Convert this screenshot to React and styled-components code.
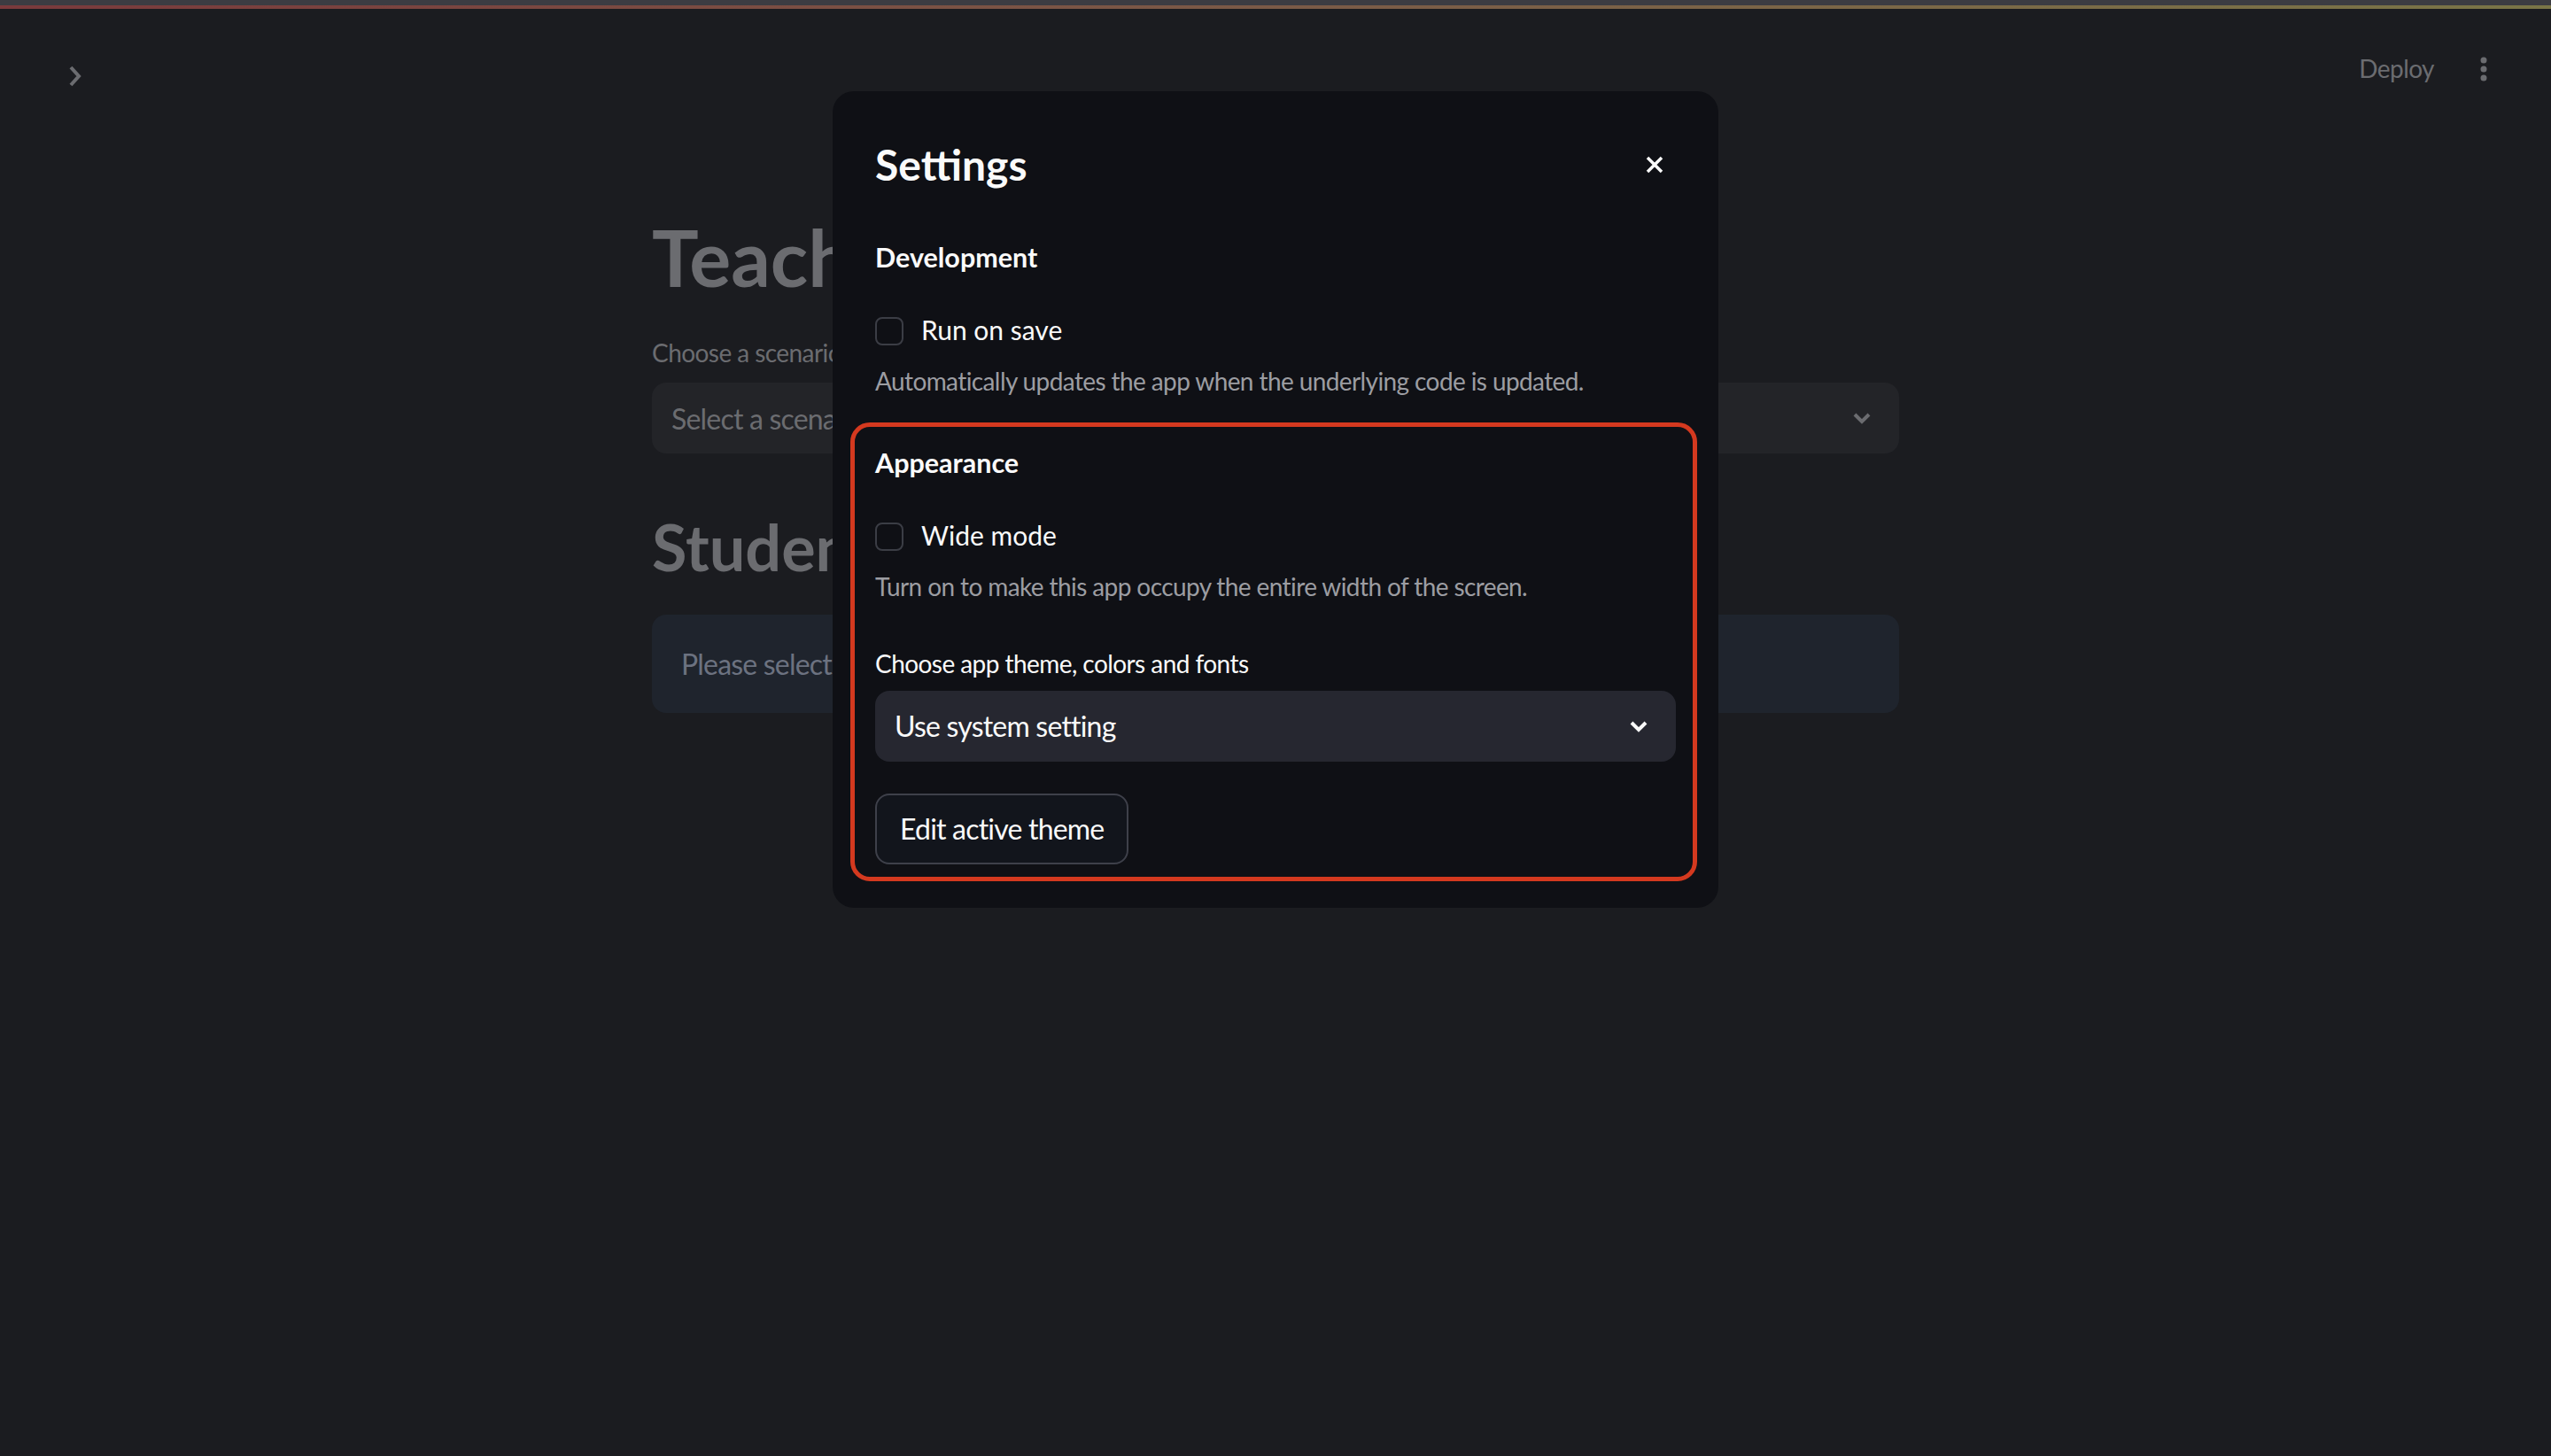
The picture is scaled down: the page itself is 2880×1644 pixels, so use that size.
import styled, { createGlobalStyle } from 'styled-components'

const GlobalStyle = createGlobalStyle`
  html, body {
    margin: 0;
    padding: 0;
  }
  body {
    background: #1b1c20;
    font-family: Lato, "Liberation Sans", sans-serif;
    -webkit-font-smoothing: antialiased;
  }
  * {
    box-sizing: border-box;
  }
`

const Page = styled.div`
  min-height: 100vh;
  background: #1b1c20;
`

const TopBar = styled.div`
  height: 10px;
  border-top: 6px solid #3c3c42;
  background: linear-gradient(90deg, #7a3a3c 0%, #7b5a47 50%, #7a7547 100%);
`

const Header = styled.header`
  height: 120px;
  display: flex;
  justify-content: space-between;
  align-items: flex-start;
  padding: 0 72px 0 75px;
`

const SidebarToggle = styled.svg`
  margin-top: 62px;
  width: 20px;
  height: 28px;
`

const HeaderActions = styled.div`
  display: flex;
  align-items: flex-start;
  gap: 52px;
`

const DeployLink = styled.span`
  margin-top: 53px;
  font-size: 28px;
  line-height: 28px;
  letter-spacing: -0.02em;
  color: #6b6c70;
`

const MenuDots = styled.svg`
  margin-top: 54px;
  width: 8px;
  height: 28px;
`

const Main = styled.main`
  width: 1408px;
  margin: 0 auto;
  padding-top: 108px;
`

const PageTitle = styled.h1`
  margin: 0;
  font-size: 88px;
  font-weight: 700;
  line-height: 1.2;
  color: #6b6c70;
  white-space: nowrap;
`

const SubTitle = styled.h2`
  margin: 62px 0 0;
  font-size: 72px;
  font-weight: 700;
  line-height: 1.2;
  color: #6b6c70;
  white-space: nowrap;
`

const FieldLabel = styled.div`
  margin-top: ${({ $gap }) => $gap}px;
  font-size: 28px;
  line-height: 1.2;
  letter-spacing: -0.02em;
  color: ${({ $light }) => ($light ? '#fafafa' : '#6b6c70')};
`

const SelectBox = styled.div`
  margin-top: ${({ $gap }) => $gap}px;
  height: 80px;
  display: flex;
  align-items: center;
  justify-content: space-between;
  padding: 0 31px 0 22px;
  border-radius: 16px;
  background: ${({ $light }) => ($light ? '#262730' : '#232428')};
  color: ${({ $light }) => ($light ? '#fafafa' : '#6b6c70')};
  font-size: 32px;
  letter-spacing: -0.025em;
`

const InfoBox = styled.div`
  margin-top: 33px;
  height: 111px;
  display: flex;
  align-items: center;
  padding: 0 33px;
  border-radius: 16px;
  background: #1f242d;
  color: #6c7280;
  font-size: 32px;
  letter-spacing: -0.025em;
`

const Dialog = styled.div`
  position: fixed;
  top: 103px;
  left: 50%;
  transform: translateX(-50%);
  width: 1000px;
  padding: 54px 48px 30px;
  border-radius: 24px;
  background: #0f1015;
  color: #fafafa;
`

const DialogHeader = styled.div`
  display: flex;
  align-items: center;
  justify-content: space-between;
`

const DialogTitle = styled.h2`
  margin: 0;
  font-size: 48px;
  font-weight: 700;
  line-height: 1.2;
`

const CloseButton = styled.button`
  width: 48px;
  height: 48px;
  display: flex;
  align-items: center;
  justify-content: center;
  padding: 0;
  border: none;
  background: transparent;
`

const SectionTitle = styled.h3`
  margin: ${({ $gap }) => $gap}px 0 0;
  font-size: 30.5px;
  font-weight: 700;
  line-height: 1.2;
`

const CheckRow = styled.label`
  margin-top: 50px;
  display: flex;
  align-items: center;
  gap: 20px;
  height: 32px;
`

const CheckBox = styled.span`
  width: 32px;
  height: 32px;
  border: 2px solid #3b3d45;
  border-radius: 8px;
`

const CheckLabel = styled.span`
  font-size: 30px;
  line-height: 32px;
  padding-bottom: 5px;
`

const Hint = styled.p`
  margin: 24px 0 0;
  font-size: 28px;
  line-height: 1.2;
  letter-spacing: -0.6px;
  color: #9c9da2;
`

const Highlight = styled.section`
  margin: 29px -24px 0 -28px;
  padding: 22px 19px 14px 23px;
  border: 5px solid #d4391f;
  border-radius: 22px;
`

const SecondaryButton = styled.button`
  margin-top: 36px;
  height: 80px;
  padding: 0 26px;
  border: 2px solid #3e404a;
  border-radius: 16px;
  background: #12151c;
  color: #fafafa;
  font-family: inherit;
  font-size: 32px;
  letter-spacing: -0.025em;
`

const ChevronDown = ({ color }) => (
  <svg width="22" height="14" viewBox="0 0 22 14">
    <path d="M3 3 L11 11 L19 3" fill="none" stroke={color} strokeWidth="4" />
  </svg>
)

export default function App() {
  return (
    <Page>
      <GlobalStyle />
      <TopBar />
      <Header>
        <SidebarToggle viewBox="0 0 20 28">
          <path d="M5 4 L14 14 L5 24" fill="none" stroke="#6b6c70" strokeWidth="4" />
        </SidebarToggle>
        <HeaderActions>
          <DeployLink>Deploy</DeployLink>
          <MenuDots viewBox="0 0 8 28">
            <circle cx="4" cy="4" r="3.5" fill="#6b6c70" />
            <circle cx="4" cy="14" r="3.5" fill="#6b6c70" />
            <circle cx="4" cy="24" r="3.5" fill="#6b6c70" />
          </MenuDots>
        </HeaderActions>
      </Header>

      <Main>
        <PageTitle>Teacher Training Simulator</PageTitle>
        <FieldLabel $gap={38}>Choose a scenario</FieldLabel>
        <SelectBox $gap={17}>
          <span>Select a scenario...</span>
          <ChevronDown color="#6b6c70" />
        </SelectBox>
        <SubTitle>Student Profile</SubTitle>
        <InfoBox>Please select a scenario to begin.</InfoBox>
      </Main>

      <Dialog role="dialog">
        <DialogHeader>
          <DialogTitle>Settings</DialogTitle>
          <CloseButton aria-label="Close">
            <svg width="20" height="20" viewBox="0 0 20 20">
              <path d="M2 2 L18 18 M18 2 L2 18" stroke="#fafafa" strokeWidth="3.5" />
            </svg>
          </CloseButton>
        </DialogHeader>

        <SectionTitle $gap={57}>Development</SectionTitle>
        <CheckRow>
          <CheckBox />
          <CheckLabel>Run on save</CheckLabel>
        </CheckRow>
        <Hint>Automatically updates the app when the underlying code is updated.</Hint>

        <Highlight>
          <SectionTitle $gap={0}>Appearance</SectionTitle>
          <CheckRow>
            <CheckBox />
            <CheckLabel>Wide mode</CheckLabel>
          </CheckRow>
          <Hint>Turn on to make this app occupy the entire width of the screen.</Hint>
          <FieldLabel $gap={53} $light>Choose app theme, colors and fonts</FieldLabel>
          <SelectBox $gap={13} $light>
            <span>Use system setting</span>
            <ChevronDown color="#fafafa" />
          </SelectBox>
          <SecondaryButton>Edit active theme</SecondaryButton>
        </Highlight>
      </Dialog>
    </Page>
  )
}
